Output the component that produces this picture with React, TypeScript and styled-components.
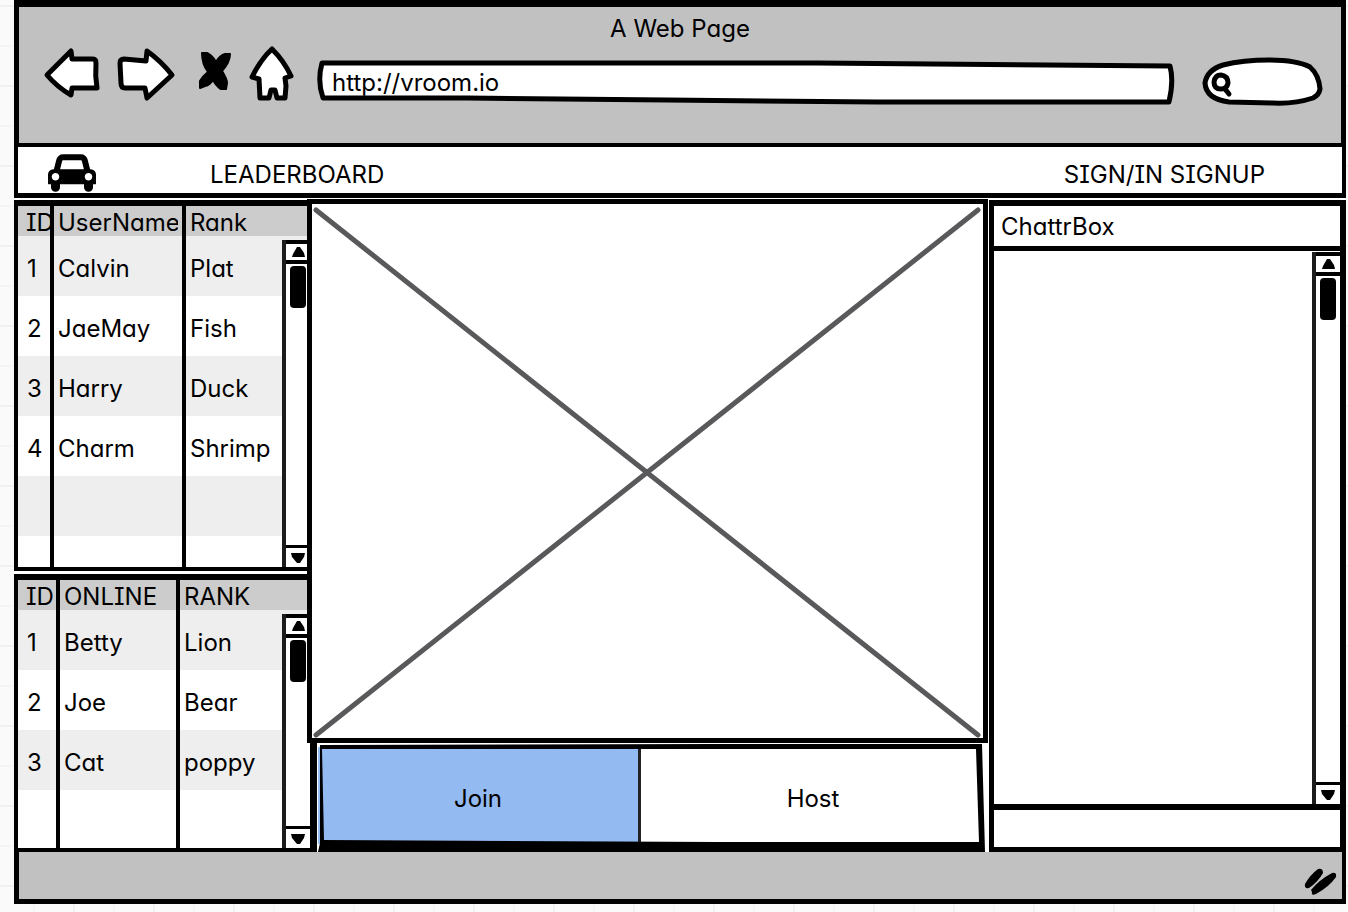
import React from "react";
import styled, { createGlobalStyle } from "styled-components";

const GlobalStyle = createGlobalStyle`
  *, *::before, *::after { box-sizing: border-box; }
  body {
    margin: 0;
    background-color: #fafafa;
    background-image:
      linear-gradient(to right, #f1f1f1 2px, transparent 2px),
      linear-gradient(to right, #f4f4f4 2px, transparent 2px),
      linear-gradient(to bottom, #f1f1f1 2px, transparent 2px),
      linear-gradient(to bottom, #f4f4f4 2px, transparent 2px);
    background-size: 80px 80px, 40px 40px, 80px 80px, 40px 40px;
    background-position: 73px 5px, 33px 5px, 73px 5px, 33px 5px;
    color: #000;
    font-family: Inter, "Open Sans", sans-serif;
    font-feature-settings: "cv11", "cv08";
    font-size: 24px;
    line-height: 30px;
  }
  button, input {
    font: inherit;
    font-feature-settings: inherit;
    color: inherit;
    border: 0;
    padding: 0;
    margin: 0;
    background: none;
  }
  button { cursor: pointer; }
  a { color: inherit; text-decoration: none; }
`;

const Page = styled.div`
  padding: 0 2px 8px 14px;
`;

const Chrome = styled.header`
  height: 143px;
  background: #c1c1c1;
  border: solid #000;
  border-width: 7px 5px 0 5px;
  padding-top: 7px;
`;

const Title = styled.h1`
  margin: 0;
  font-size: inherit;
  font-weight: 400;
  text-align: center;
`;

const Toolbar = styled.div`
  display: flex;
  align-items: center;
  height: 60px;
  padding: 0 18px 0 24px;
`;

const IconButton = styled.button<{ $gap: number }>`
  flex: none;
  margin-right: ${(p) => p.$gap}px;
  line-height: 0;
`;

const Drawing = styled.svg`
  display: block;
  fill: #fff;
  stroke: #000;
  stroke-width: 5;
  stroke-linejoin: round;
  stroke-linecap: round;
`;

const Fields = styled.div`
  display: flex;
  flex: 1;
  gap: 26px;
  min-width: 0;
  padding-top: 16px;
`;

const Field = styled.label<{ $width?: number }>`
  position: relative;
  display: block;
  flex: ${(p) => (p.$width ? `0 0 ${p.$width}px` : "1 1 0")};
  min-width: 0;
  height: 50px;
`;

const FieldOutline = styled(Drawing)`
  position: absolute;
  inset: 0;
  width: 100%;
  height: 100%;

  path { vector-effect: non-scaling-stroke; }
`;

const FieldInput = styled.input<{ $indent: number }>`
  position: relative;
  width: 100%;
  height: 50px;
  padding: 0 14px 0 ${(p) => p.$indent}px;
  outline: none;
`;

const NavBar = styled.nav`
  display: flex;
  align-items: center;
  justify-content: space-between;
  height: 55px;
  padding: 10px 77px 0 30px;
  background: #fff;
  border: solid #000;
  border-width: 4px 4px 5px 4px;
`;

const NavGroup = styled.div`
  display: flex;
  align-items: center;
  gap: 114px;
`;

const CarIcon = styled.svg`
  display: block;
  margin-bottom: 4px;
`;

const Main = styled.main`
  display: grid;
  grid-template-columns: 303px minmax(0, 1fr) 358px;
  background: #fff;
`;

const Sidebar = styled.aside`
  display: flex;
  flex-direction: column;
  gap: 3px;
  padding-top: 2px;
`;

const TablePanel = styled.section`
  position: relative;
  background: #fff;
  border: solid #000;
  border-width: 6px 7px 4px 4px;
`;

const Table = styled.table`
  width: 100%;
  table-layout: fixed;
  border-collapse: separate;
  border-spacing: 0;
`;

const HeadCell = styled.th<{ $divided: boolean }>`
  height: 30px;
  padding: 2px 4px 0 4px;
  background: #ccc;
  border-right: ${(p) => (p.$divided ? "4px solid #000" : "0")};
  font-weight: 400;
  text-align: left;

  &:first-child { padding: 2px 0 0 8px; }
`;

const ClippedLabel = styled.span`
  display: block;
  height: 28px;
  line-height: 30px;
  overflow: hidden;
  white-space: nowrap;
`;

const BodyRow = styled.tr<{ $height: number }>`
  height: ${(p) => p.$height}px;

  &:nth-child(odd) { background: #eee; }
`;

const Cell = styled.td<{ $divided: boolean }>`
  padding: 6px 0 0 4px;
  border-right: ${(p) => (p.$divided ? "4px solid #000" : "0")};
  line-height: 24px;
  white-space: nowrap;

  &:first-child { padding-left: 9px; }
`;

const Scroller = styled.div`
  display: flex;
  flex-direction: column;
  width: 28px;
  background: #fff;
  border-left: 4px solid #1c1c1c;
`;

const TableScroller = styled(Scroller)`
  position: absolute;
  top: 34px;
  right: 0;
  bottom: 0;
`;

const ScrollButton = styled.button<{ $up?: boolean }>`
  display: flex;
  align-items: center;
  justify-content: center;
  height: ${(p) => (p.$up ? 24 : 22)}px;
  border: solid #000;
  border-width: ${(p) => (p.$up ? "4px 0 4px 0" : "3px 0 0 0")};
`;

const Thumb = styled.div`
  width: 16px;
  height: 42px;
  margin: 2px 0 auto 4px;
  background: #000;
  border-radius: 4px;
`;

const Center = styled.section`
  display: flex;
  flex-direction: column;
`;

const Stage = styled.div`
  position: relative;
  flex: 1;
  margin-left: -10px;
  margin-top: 1px;
  background: #fff;
  border: 5px solid #000;
`;

const Cross = styled.svg`
  position: absolute;
  inset: 0;
  width: 100%;
  height: 100%;
  fill: none;
  stroke: #59595b;
  stroke-width: 5;
  stroke-linecap: round;

  path { vector-effect: non-scaling-stroke; }
`;

const ButtonGroup = styled.div`
  position: relative;
  display: grid;
  grid-template-columns: 323px minmax(0, 1fr);
  height: 109px;
  margin: 0 3px 0 1px;
  padding: 4px 0 8px 0;
`;

const ChoiceButton = styled.button<{ $active?: boolean }>`
  padding-top: 6px;
  background: ${(p) => (p.$active ? "#94baf2" : "#fff")};
  border-right: ${(p) => (p.$active ? "3px solid #222" : "0")};
`;

const GroupOutline = styled.svg`
  position: absolute;
  inset: 0;
  width: 100%;
  height: 100%;
  pointer-events: none;
`;

const Chat = styled.aside`
  display: flex;
  flex-direction: column;
  margin-top: 2px;
  margin-left: 1px;
  border: solid #000;
  border-width: 6px 6px 5px 5px;
`;

const ChatTitle = styled.h2`
  margin: 0;
  height: 45px;
  padding: 6px 0 0 7px;
  border-bottom: 5px solid #000;
  font-size: inherit;
  font-weight: 400;
`;

const ChatBody = styled.div`
  display: flex;
  justify-content: flex-end;
  flex: 1;
  padding-top: 1px;
`;

const ChatInput = styled.input`
  width: 100%;
  height: 43px;
  padding: 0 8px;
  border-top: 6px solid #000;
  outline: none;
`;

const Footer = styled.footer`
  display: flex;
  align-items: center;
  justify-content: flex-end;
  height: 52px;
  padding: 12px 4px 0 0;
  background: #c1c1c1;
  border: solid #000;
  border-width: 0 4px 5px 5px;
`;

type ScrollProps = { as: typeof Scroller; name: string };

function ScrollBar({ as: Root, name }: ScrollProps) {
  return (
    <Root>
      <ScrollButton $up aria-label={`Scroll ${name} up`}>
        <svg width="16" height="12" viewBox="0 0 16 12">
          <path d="M2 11 L3 8 L7 1 L10 1 L14 7 L15 11 Z" />
        </svg>
      </ScrollButton>
      <Thumb />
      <ScrollButton aria-label={`Scroll ${name} down`}>
        <svg width="16" height="12" viewBox="0 0 16 12">
          <path d="M1 1 L15 1 L14 5 L10 11 L7 11 L2 5 Z" />
        </svg>
      </ScrollButton>
    </Root>
  );
}

type PlayerTableProps = {
  name: string;
  heads: string[];
  widths: number[];
  rows: string[][];
  tail: number;
};

function PlayerTable({ name, heads, widths, rows, tail }: PlayerTableProps) {
  return (
    <TablePanel>
      <Table aria-label={name}>
        <colgroup>
          <col style={{ width: widths[0] }} />
          <col style={{ width: widths[1] }} />
          <col />
        </colgroup>
        <thead>
          <tr>
            {heads.map((h, i) => (
              <HeadCell key={h} $divided={i < 2}>
                <ClippedLabel>{h}</ClippedLabel>
              </HeadCell>
            ))}
          </tr>
        </thead>
        <tbody>
          {rows.map((row, r) => (
            <BodyRow key={r} $height={r === rows.length - 1 ? tail : 60}>
              {row.map((text, i) => (
                <Cell key={i} $divided={i < 2}>{text}</Cell>
              ))}
            </BodyRow>
          ))}
        </tbody>
      </Table>
      <ScrollBar as={TableScroller} name={name} />
    </TablePanel>
  );
}

const blank = ["", "", ""];

export default function App() {
  return (
    <>
      <GlobalStyle />
      <Page>
        <Chrome>
          <Title>A Web Page</Title>
          <Toolbar>
            <IconButton $gap={16} aria-label="Back">
              <Drawing width="58" height="56" viewBox="0 0 58 56">
                <path d="M4 29 L28 5 L29 13 L50 13 Q53 13 53 17 Q52 30 54 42 L29 42 L28 49 Q14 41 4 29 Z" />
              </Drawing>
            </IconButton>
            <IconButton $gap={19} aria-label="Forward">
              <Drawing width="60" height="56" viewBox="0 0 60 56">
                <path d="M3 17 Q3 13 7 13 L29 15 L30 5 Q44 15 55 29 L30 52 L28 42 L8 42 Q4 42 4 37 Z" />
              </Drawing>
            </IconButton>
            <IconButton $gap={14} aria-label="Stop">
              <Drawing width="38" height="56" viewBox="0 0 38 56">
                <path
                  d="M6 7 L11 7 Q16 9 20 16 Q24 9 29 8 L34 8 Q34 16 26 25 Q31 33 31 37 L30 43 L25 43 Q21 41 17 34 Q13 40 9 40 L4 42 L4 35 Q7 30 12 26 Q6 18 6 7 Z"
                  style={{ fill: "#000", strokeWidth: 2 }}
                />
              </Drawing>
            </IconButton>
            <IconButton $gap={20} aria-label="Home">
              <Drawing width="48" height="58" viewBox="0 0 48 58">
                <path d="M24 4 Q36 16 43 31 L37 33 L38 41 L37 53 L29 53 L27 45 L23 45 L21 53 L12 53 L11 34 L4 32 Q13 14 24 4 Z" />
              </Drawing>
            </IconButton>
            <Fields>
              <Field>
                <FieldOutline viewBox="0 0 856 50" preserveAspectRatio="none">
                  <path d="M6 6 L500 6 L851 9 Q855 24 850 45 L560 45 L350 43 L150 41 L7 41 Q1 24 6 6 Z" />
                </FieldOutline>
                <FieldInput $indent={16} aria-label="Address" defaultValue="http://vroom.io" />
              </Field>
              <Field $width={122}>
                <FieldOutline viewBox="0 0 122 50">
                  <path d="M4 26 Q6 13 22 8 Q42 3 68 3 Q96 3 109 10 Q118 18 119 32 Q118 38 112 41 Q94 47 72 46 L28 45 Q5 42 4 26 Z" />
                  <path d="M20 18 Q27 19 27 26 Q26 32 20 32 Q13 32 13 25 Q14 18 20 18 Z M24 32 L28 37" />
                </FieldOutline>
                <FieldInput $indent={36} aria-label="Search" />
              </Field>
            </Fields>
          </Toolbar>
        </Chrome>

        <NavBar>
          <NavGroup>
            <CarIcon width="48" height="38" viewBox="0 128 2048 1600" aria-label="Vroom">
              <path d="M480 1088q0-66-47-113t-113-47-113 47-47 113 47 113 113 47 113-47 47-113zM516 768h1016l-89-357q-2-8-14-17.500t-21-9.500h-768q-9 0-21 9.500t-14 17.500zM1888 1088q0-66-47-113t-113-47-113 47-47 113 47 113 113 47 113-47 47-113zM2048 992v384q0 14-9 23t-23 9h-96v128q0 80-56 136t-136 56-136-56-56-136v-128h-1024v128q0 80-56 136t-136 56-136-56-56-136v-128h-96q-14 0-23-9t-9-23v-384q0-93 65.500-158.500t158.500-65.500h28l105-419q23-94 104-157.500t179-63.500h768q98 0 179 63.500t104 157.500l105 419h28q93 0 158.500 65.500t65.500 158.500z" />
            </CarIcon>
            <a href="#leaderboard">LEADERBOARD</a>
          </NavGroup>
          <a href="#signin">SIGN/IN SIGNUP</a>
        </NavBar>

        <Main>
          <Sidebar>
            <PlayerTable
              name="Leaderboard"
              heads={["ID", "UserName", "Rank"]}
              widths={[36, 132]}
              tail={31}
              rows={[
                ["1", "Calvin", "Plat"],
                ["2", "JaeMay", "Fish"],
                ["3", "Harry", "Duck"],
                ["4", "Charm", "Shrimp"],
                blank,
                blank,
              ]}
            />
            <PlayerTable
              name="Online players"
              heads={["ID", "ONLINE", "RANK"]}
              widths={[42, 120]}
              tail={58}
              rows={[
                ["1", "Betty", "Lion"],
                ["2", "Joe", "Bear"],
                ["3", "Cat", "poppy"],
                blank,
              ]}
            />
          </Sidebar>

          <Center>
            <Stage>
              <Cross viewBox="0 0 672 534" preserveAspectRatio="none">
                <path d="M4 6 L667 531 M667 6 L4 531" />
              </Cross>
            </Stage>
            <ButtonGroup>
              <ChoiceButton $active>Join</ChoiceButton>
              <ChoiceButton>Host</ChoiceButton>
              <GroupOutline viewBox="0 0 667 109" preserveAspectRatio="none">
                <path
                  fillRule="evenodd"
                  d="M2 2 L400 1 L664 1 L667 109 L0 109 L2 100 Z M4 6 L658 6 L661 99 L400 99 L6 97 Z"
                />
              </GroupOutline>
            </ButtonGroup>
          </Center>

          <Chat>
            <ChatTitle>ChattrBox</ChatTitle>
            <ChatBody>
              <ScrollBar as={Scroller} name="chat" />
            </ChatBody>
            <ChatInput aria-label="Message" />
          </Chat>
        </Main>

        <Footer>
          <svg width="34" height="28" viewBox="0 0 34 28" aria-hidden="true">
            <path d="M1 16 Q6 7 14 1 Q19 0 19 5 Q14 14 5 20 Q0 21 1 16 Z M7 22 Q15 12 28 5 Q33 4 32 9 Q25 19 12 26 Q7 28 8 24 Z" />
          </svg>
        </Footer>
      </Page>
    </>
  );
}
